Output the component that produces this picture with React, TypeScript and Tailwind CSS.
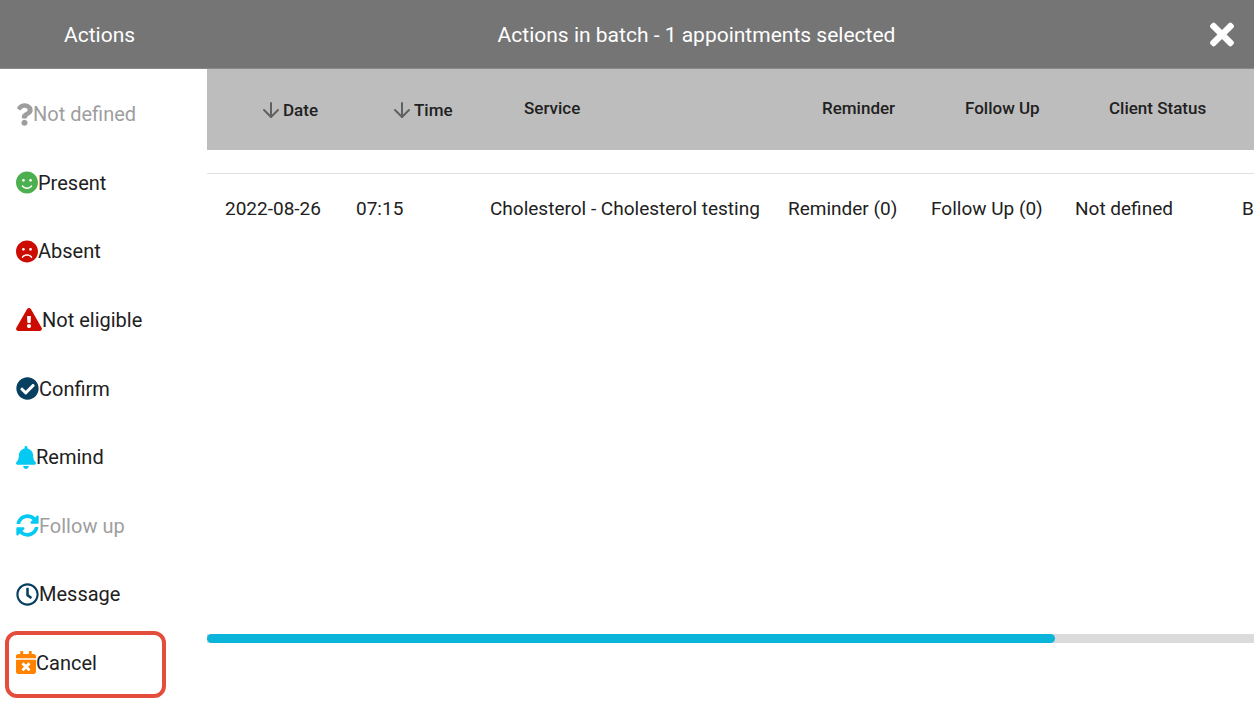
import type { IconType } from 'react-icons'
import {
  FaBell,
  FaCalendarTimes,
  FaCheckCircle,
  FaExclamationTriangle,
  FaFrown,
  FaQuestion,
  FaRegClock,
  FaSmile,
  FaSyncAlt,
  FaTimes,
} from 'react-icons/fa'
import { ArrowDown } from 'lucide-react'
import clsx from 'clsx'

interface Action {
  label: string
  icon: IconType
  iconClass: string
  disabled?: boolean
  highlighted?: boolean
}

const ACTIONS: Action[] = [
  { label: 'Not defined', icon: FaQuestion, iconClass: 'w-[17px] text-[#9e9e9e]', disabled: true },
  { label: 'Present', icon: FaSmile, iconClass: 'w-[22px] text-[#4caf50]' },
  { label: 'Absent', icon: FaFrown, iconClass: 'w-[22px] text-[#cc0c00]' },
  { label: 'Not eligible', icon: FaExclamationTriangle, iconClass: 'w-[26px] text-[#cc0c00]' },
  { label: 'Confirm', icon: FaCheckCircle, iconClass: 'w-[23px] text-[#063f60]' },
  { label: 'Remind', icon: FaBell, iconClass: 'w-[20px] text-[#04c9f3]' },
  { label: 'Follow up', icon: FaSyncAlt, iconClass: 'w-[23px] text-[#04c9f3]', disabled: true },
  { label: 'Message', icon: FaRegClock, iconClass: 'w-[23px] text-[#063f60]' },
  { label: 'Cancel', icon: FaCalendarTimes, iconClass: 'w-[20px] text-[#ff8200]', highlighted: true },
]

interface Column {
  label: string
  width: string
  sortable?: boolean
}

const COLUMNS: Column[] = [
  { label: 'Date', width: 'w-[131px]', sortable: true },
  { label: 'Time', width: 'w-[134px]', sortable: true },
  { label: 'Service', width: 'w-[298px]' },
  { label: 'Reminder', width: 'w-[143px]' },
  { label: 'Follow Up', width: 'w-[144px]' },
  { label: 'Client Status', width: 'w-[167px]' },
  { label: '', width: 'w-[277px]' },
]

const ROWS = [
  ['2022-08-26', '07:15', 'Cholesterol - Cholesterol testing', 'Reminder (0)', 'Follow Up (0)', 'Not defined', 'B'],
]

function ActionItem({ label, icon: Icon, iconClass, disabled, highlighted }: Action) {
  return (
    <li className="relative flex flex-1">
      <button
        type="button"
        disabled={disabled}
        className={clsx(
          'flex w-full items-center px-4 text-left text-[20px] leading-6',
          disabled ? 'text-[#9e9e9e]' : 'text-[#212121]'
        )}
      >
        <Icon className={clsx('h-[23px] shrink-0', iconClass)} />
        {label}
      </button>
      {highlighted && (
        <span className="pointer-events-none absolute top-0.5 -bottom-px left-[5px] w-[161px] rounded-xl border-4 border-[#e44d3c]" />
      )}
    </li>
  )
}

function AppointmentsTable() {
  return (
    <table className="w-[1294px] table-fixed border-collapse text-left whitespace-nowrap text-[#212121]">
      <thead>
        <tr className="h-[81px] bg-[#bdbdbd]">
          {COLUMNS.map((c, i) => (
            <th
              key={i}
              className={clsx('pl-[52px] text-[17px] leading-6 font-medium', c.width, !c.sortable && 'pb-1')}
            >
              {c.sortable ? (
                <button type="button" className="flex items-center">
                  <ArrowDown className="h-6 w-6 text-[#616161]" strokeWidth={2} />
                  {c.label}
                </button>
              ) : (
                c.label
              )}
            </th>
          ))}
        </tr>
      </thead>
      <tbody>
        <tr className="h-[23px] border-b border-[#e0e0e0]">
          <td colSpan={COLUMNS.length} />
        </tr>
        {ROWS.map((row) => (
          <tr key={row[0]} className="h-[71px]">
            {row.map((cell, i) => (
              <td key={i} className="pl-[18px] text-[19px] leading-6">
                {cell}
              </td>
            ))}
          </tr>
        ))}
      </tbody>
    </table>
  )
}

export default function App() {
  return (
    <div className="flex min-h-screen flex-col bg-white font-[Roboto,sans-serif]">
      <header className="flex h-[69px] items-center border-b border-[#8a8a8a] bg-[#757575] text-[21px] leading-7 text-white">
        <h2 className="w-[207px] shrink-0 pt-0.5 pl-16">Actions</h2>
        <h1 className="flex-1 pt-0.5 pr-6 text-center">Actions in batch - 1 appointments selected</h1>
        <button type="button" aria-label="Close" className="mr-5 shrink-0">
          <FaTimes className="h-[35px] w-6" />
        </button>
      </header>

      <div className="flex flex-1">
        <aside className="flex w-[207px] shrink-0 flex-col">
          <ul className="flex flex-1 flex-col pt-[11px] pb-[9px]">
            {ACTIONS.map((a) => (
              <ActionItem key={a.label} {...a} />
            ))}
          </ul>
        </aside>

        <main className="flex min-w-0 flex-1 flex-col pb-[63px]">
          <div className="flex-1 overflow-hidden">
            <AppointmentsTable />
          </div>
          <div className="h-[9px] bg-[#dbdbdb]">
            <div className="h-full w-[81%] rounded-full bg-[#0ab5d9]" />
          </div>
        </main>
      </div>
    </div>
  )
}
